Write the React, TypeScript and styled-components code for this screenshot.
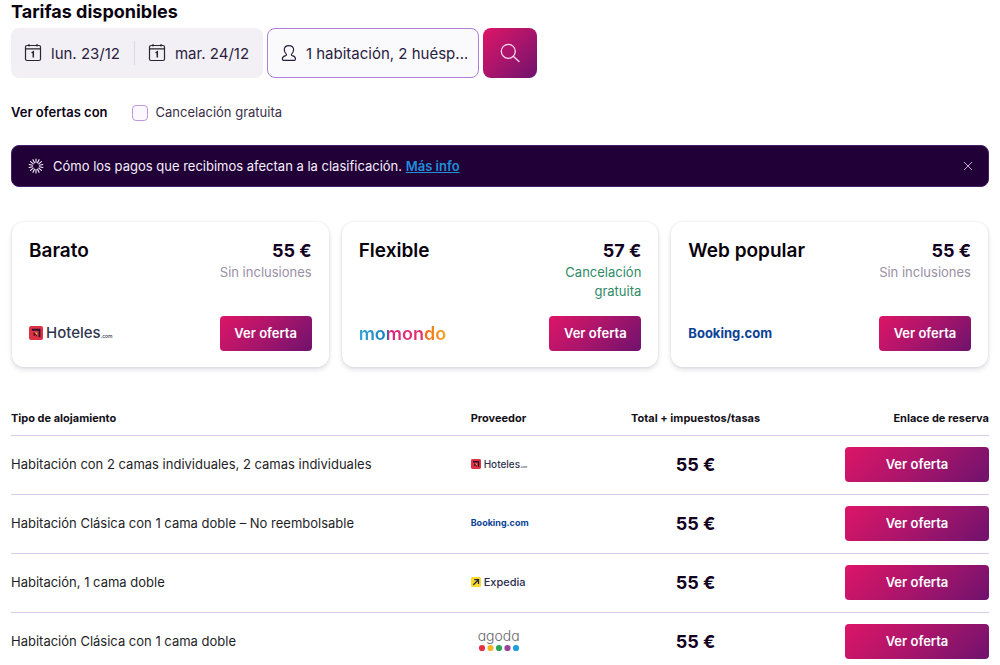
import React from "react";
import styled, { createGlobalStyle } from "styled-components";

const GlobalStyle = createGlobalStyle`
  *, *::before, *::after { box-sizing: border-box; }
  body {
    margin: 0;
    background: #fff;
    color: #1e1e26;
    font-family: Inter, "Liberation Sans", sans-serif;
    font-size: 13px;
    line-height: 19px;
  }
  button, input { font: inherit; color: inherit; }
  button { cursor: pointer; }
`;

const brandGradient = "linear-gradient(135deg, #dd1567 0%, #a9156b 50%, #6f126d 100%)";

const Page = styled.main`
  padding: 0 11px;
`;

const Title = styled.h1`
  margin: 0;
  padding-bottom: 4px;
  font-size: 18px;
  line-height: 24px;
  font-weight: 700;
  color: #0a0210;
`;

const SearchBar = styled.div`
  display: flex;
  gap: 4px;
  height: 50px;
  font-size: 15px;
  color: #2b1d3d;
`;

const DateGroup = styled.div`
  display: flex;
  align-items: center;
  border-radius: 8px;
  background: #f2f0f5;
`;

const DateButton = styled.button`
  display: flex;
  align-items: center;
  gap: 9px;
  height: 100%;
  padding: 0 14px 0 13px;
  border: 0;
  background: none;
  white-space: nowrap;
`;

const Divider = styled.span`
  width: 1px;
  height: 24px;
  background: #dcd8e2;
`;

const GuestButton = styled.button`
  display: flex;
  align-items: center;
  gap: 8px;
  width: 212px;
  padding: 0 11px 0 12px;
  border: 1px solid #b17fdc;
  border-radius: 8px;
  background: #fafafd;
`;

const GuestText = styled.span`
  overflow: hidden;
  white-space: nowrap;
`;

const SearchButton = styled.button`
  display: flex;
  align-items: center;
  justify-content: center;
  width: 54px;
  padding: 0;
  border: 0;
  border-radius: 8px;
  background: ${brandGradient};
  color: #fbd9ee;
`;

const FilterRow = styled.div`
  display: flex;
  align-items: center;
  gap: 24px;
  padding: 25px 0 23px;
`;

const FilterTitle = styled.span`
  font-weight: 600;
  color: #0c0318;
`;

const CheckLabel = styled.label`
  display: flex;
  align-items: center;
  gap: 8px;
  color: #3a2f47;
`;

const CheckBox = styled.input`
  appearance: none;
  width: 16px;
  height: 16px;
  margin: 0;
  border: 1px solid #bf97e2;
  border-radius: 4px;
  background: #fbf9fd;
  &:checked { background: #a9156b; }
`;

const Banner = styled.aside`
  display: flex;
  align-items: center;
  gap: 9px;
  height: 42px;
  padding: 0 15px 0 16px;
  border: 1px solid #45206a;
  border-radius: 8px;
  background: #210038;
  color: #f5effa;
`;

const BannerText = styled.p`
  flex: 1;
  margin: 0;
`;

const InfoLink = styled.a`
  font-weight: 600;
  color: #1e8fd8;
`;

const CloseButton = styled.button`
  display: flex;
  padding: 0;
  border: 0;
  background: none;
  color: #c3b3d2;
`;

const Cards = styled.section`
  display: grid;
  grid-template-columns: repeat(3, 1fr);
  gap: 13px;
  padding: 35px 1px 36px;
`;

const Card = styled.article`
  display: flex;
  flex-direction: column;
  justify-content: space-between;
  height: 145px;
  padding: 17px 17px 16px;
  border-radius: 12px;
  background: #fff;
  box-shadow: 0 0 3px rgba(30, 20, 60, 0.1), 0 3px 5px rgba(30, 20, 60, 0.12);
`;

const CardRow = styled.div<{ $align: string }>`
  display: flex;
  justify-content: space-between;
  align-items: ${(p) => p.$align};
`;

const CardTitle = styled.h2`
  margin: 0;
  font-size: 19px;
  line-height: 24px;
  font-weight: 600;
  color: #08020c;
`;

const CardPrice = styled.div`
  width: 100px;
  text-align: right;
`;

const Price = styled.strong`
  display: block;
  font-size: 18px;
  line-height: 24px;
  font-weight: 700;
  color: #12021f;
`;

const Note = styled.span<{ $good?: boolean }>`
  color: ${(p) => (p.$good ? "#2f8a68" : "#9a90a6")};
`;

const OfferButton = styled.button<{ $wide?: boolean }>`
  width: ${(p) => (p.$wide ? "144px" : "92px")};
  height: 35px;
  padding: 0;
  border: 0;
  border-radius: 4px;
  background: ${brandGradient};
  color: #fff;
  font-weight: 600;
`;

const RateTable = styled.table`
  width: 100%;
  table-layout: fixed;
  border-collapse: collapse;
`;

const HeadCell = styled.th<{ $width: string; $align: "left" | "center" | "right" }>`
  width: ${(p) => p.$width};
  height: 32px;
  padding: 0;
  border-bottom: 1px solid #d9cbea;
  font-size: 11px;
  font-weight: 700;
  text-align: ${(p) => p.$align};
  color: #141018;
`;

const Row = styled.tr`
  &:not(:last-child) > td { border-bottom: 1px solid #d9cbea; }
`;

const Cell = styled.td<{ $align?: "center" | "right" }>`
  height: 59px;
  padding: 0;
  text-align: ${(p) => p.$align ?? "left"};
`;

const Logo = styled.span<{ $size: number; $color: string; $weight?: number }>`
  display: flex;
  align-items: center;
  gap: 3px;
  padding-bottom: 2px;
  font-size: ${(p) => p.$size}px;
  line-height: 16px;
  font-weight: ${(p) => p.$weight ?? 500};
  color: ${(p) => p.$color};
`;

const LogoText = styled.span`
  display: flex;
  align-items: baseline;
`;

const DotCom = styled.span<{ $small?: boolean }>`
  font-size: ${(p) => (p.$small ? "3px" : "5px")};
  line-height: 5px;
`;

const Momondo = styled.span`
  font-size: 18px;
  line-height: 20px;
  font-weight: 600;
  color: transparent;
  background: linear-gradient(90deg, #35a9d9 0%, #1878b8 33%, #d9257c 34%, #e0356c 73%, #ee6a1f 74%, #f5a31c 100%);
  background-clip: text;
`;

const Agoda = styled.span`
  display: flex;
  flex-direction: column;
  align-items: center;
  gap: 1px;
  width: 56px;
  padding-bottom: 4px;
  font-size: 14px;
  line-height: 15px;
  font-weight: 300;
  font-feature-settings: "cv11";
  color: #66666a;
`;

const iconProps = { fill: "none", stroke: "currentColor", "aria-hidden": true } as const;

const CalendarIcon = () => (
  <svg width="18" height="20" viewBox="0 0 18 20" {...iconProps} stroke="#2a2530">
    <rect x="1.5" y="2.5" width="15" height="15" rx="1.5" strokeWidth="1.2" />
    <path d="M1.5 5.900h15M5 1v2.500M13 1v2.500" strokeWidth="1.2" />
    <path d="M7.600 9.800l1.700-1v5.600" strokeWidth="1.5" />
  </svg>
);

const PersonIcon = () => (
  <svg width="18" height="18" viewBox="0 0 18 18" {...iconProps} strokeWidth="1.2">
    <path d="M6.3 10.1C4.900 8.900 4.300 7.500 4.300 5.800 4.300 3.200 6 1.600 9 1.600s4.700 1.600 4.700 4.200c0 1.700-.6 3.100-2 4.300-.5.700-.2 1.200.6 1.500 2.200.6 3.300 1.400 3.300 3.200 0 1-.4 1.600-1.200 1.600H3.600c-.8 0-1.200-.6-1.200-1.600 0-1.800 1.100-2.600 3.300-3.200.8-.3 1.100-.8.6-1.500z" />
  </svg>
);

const SearchIcon = () => (
  <svg width="20" height="20" viewBox="0 0 20 20" {...iconProps} strokeWidth="1.3" strokeLinecap="round">
    <circle cx="8.300" cy="8.300" r="7" />
    <path d="M13.500 13.500l5.500 5" />
  </svg>
);

const BurstIcon = () => (
  <svg width="16" height="16" viewBox="0 0 16 16" {...iconProps} strokeWidth="1.1" strokeLinecap="round">
    {Array.from({ length: 14 }, (_, i) => (
      <path key={i} d="M8 1v3.500" transform={`rotate(${(i * 360) / 14} 8 8)`} />
    ))}
  </svg>
);

const CloseIcon = () => (
  <svg width="10" height="10" viewBox="0 0 10 10" {...iconProps} strokeWidth="1">
    <path d="M1 1l8 8M9 1l-8 8" />
  </svg>
);

const HotelesMark = ({ size }: { size: number }) => (
  <svg width={size} height={size} viewBox="0 0 14 14" aria-hidden="true">
    <rect width="14" height="14" rx="2" fill="#de3145" />
    <path d="M2.800 2.800h8.600v8.400H9.600V4.800H2.800z" fill="#2c1230" />
    <path d="M4.400 6.400h3.600v3.800H6.800V8.500L5.200 10.100 4.400 9.300z" fill="#4a1426" />
    <path d="M5.400 6.400h2.800v2.800z" fill="#ffb93c" />
  </svg>
);

const ExpediaMark = () => (
  <svg width="10" height="10" viewBox="0 0 10 10" aria-hidden="true">
    <rect width="10" height="10" rx="1.500" fill="#f8d92c" />
    <path d="M2.300 7.900L7 3.200M3.300 2.700h4.200v4.200" fill="none" stroke="#23234a" strokeWidth="1.300" />
  </svg>
);

const HotelesLogo = ({ small }: { small?: boolean }) => (
  <Logo $size={small ? 10 : 15} $color="#30354f">
    <HotelesMark size={small ? 10 : 14} />
    <LogoText>
      Hoteles<DotCom $small={small}>.com</DotCom>
    </LogoText>
  </Logo>
);

const BookingLogo = ({ small }: { small?: boolean }) => (
  <Logo $size={small ? 9 : 13} $color="#0b4295" $weight={700}>Booking.com</Logo>
);

const ExpediaLogo = () => (
  <Logo $size={11} $color="#2b2d4c">
    <ExpediaMark />
    Expedia
  </Logo>
);

const AgodaLogo = () => (
  <Agoda>
    agoda
    <svg width="42" height="8" viewBox="0 0 42 8" aria-hidden="true">
      {["#e0313f", "#f5b52a", "#2aa558", "#98449b", "#1fa0dc"].map((c, i) => (
        <circle key={c} cx={4 + i * 8.5} cy="4" r="3.100" fill={c} />
      ))}
    </svg>
  </Agoda>
);

const cards = [
  { title: "Barato", price: "55 €", note: "Sin inclusiones", good: false, logo: <HotelesLogo /> },
  { title: "Flexible", price: "57 €", note: "Cancelación gratuita", good: true, logo: <Momondo>momondo</Momondo> },
  { title: "Web popular", price: "55 €", note: "Sin inclusiones", good: false, logo: <BookingLogo /> },
];

const rates = [
  { room: "Habitación con 2 camas individuales, 2 camas individuales", price: "55 €", logo: <HotelesLogo small /> },
  { room: "Habitación Clásica con 1 cama doble – No reembolsable", price: "55 €", logo: <BookingLogo small /> },
  { room: "Habitación, 1 cama doble", price: "55 €", logo: <ExpediaLogo /> },
  { room: "Habitación Clásica con 1 cama doble", price: "55 €", logo: <AgodaLogo /> },
];

export default function App() {
  return (
    <>
      <GlobalStyle />
      <Page>
        <Title>Tarifas disponibles</Title>
        <SearchBar>
          <DateGroup>
            <DateButton><CalendarIcon />lun. 23/12</DateButton>
            <Divider />
            <DateButton><CalendarIcon />mar. 24/12</DateButton>
          </DateGroup>
          <GuestButton><PersonIcon /><GuestText>1 habitación, 2 huésp...</GuestText></GuestButton>
          <SearchButton aria-label="Buscar"><SearchIcon /></SearchButton>
        </SearchBar>
        <FilterRow>
          <FilterTitle>Ver ofertas con</FilterTitle>
          <CheckLabel><CheckBox type="checkbox" />Cancelación gratuita</CheckLabel>
        </FilterRow>
        <Banner>
          <BurstIcon />
          <BannerText>
            Cómo los pagos que recibimos afectan a la clasificación. <InfoLink href="#info">Más info</InfoLink>
          </BannerText>
          <CloseButton aria-label="Cerrar"><CloseIcon /></CloseButton>
        </Banner>
        <Cards>
          {cards.map((c) => (
            <Card key={c.title}>
              <CardRow $align="flex-start">
                <CardTitle>{c.title}</CardTitle>
                <CardPrice>
                  <Price>{c.price}</Price>
                  <Note $good={c.good}>{c.note}</Note>
                </CardPrice>
              </CardRow>
              <CardRow $align="center">
                {c.logo}
                <OfferButton>Ver oferta</OfferButton>
              </CardRow>
            </Card>
          ))}
        </Cards>
        <RateTable>
          <thead>
            <tr>
              <HeadCell $width="47%" $align="left">Tipo de alojamiento</HeadCell>
              <HeadCell $width="12%" $align="left">Proveedor</HeadCell>
              <HeadCell $width="22%" $align="center">Total + impuestos/tasas</HeadCell>
              <HeadCell $width="19%" $align="right">Enlace de reserva</HeadCell>
            </tr>
          </thead>
          <tbody>
            {rates.map((r) => (
              <Row key={r.room}>
                <Cell>{r.room}</Cell>
                <Cell>{r.logo}</Cell>
                <Cell $align="center"><Price>{r.price}</Price></Cell>
                <Cell $align="right"><OfferButton $wide>Ver oferta</OfferButton></Cell>
              </Row>
            ))}
          </tbody>
        </RateTable>
      </Page>
    </>
  );
}
